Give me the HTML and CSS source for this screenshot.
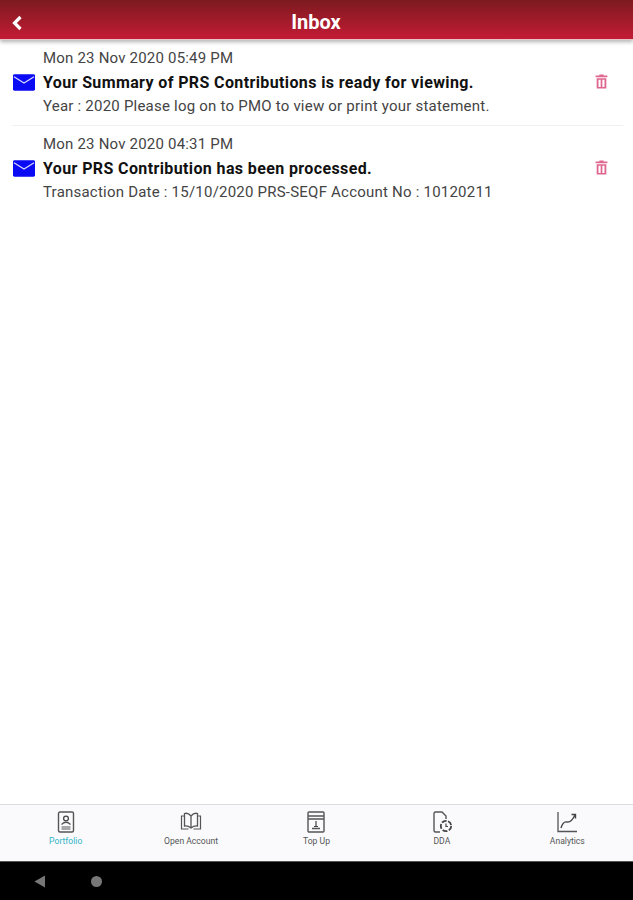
FILE: index.html
```html
<!doctype html>
<html lang="en-us">
<head>
    <title>Inbox</title>
    <link rel="stylesheet" href="styles.css">
</head>
<body>
    <div class="screen">
        <div class="top-bar">
            <svg class="back-icon" viewBox="0 0 12 16"><path d="M9.500 2 L3.500 8 L9.500 14" fill="none" stroke="#fff" stroke-width="3.200"/></svg>
            <div class="top-title">Inbox</div>
        </div>

        <div class="msg-list">
            <div class="msg">
                <div class="msg-date">Mon 23 Nov 2020 05:49 PM</div>
                <div class="msg-title">Your Summary of PRS Contributions is ready for viewing.</div>
                <div class="msg-body">Year : 2020 Please log on to PMO to view or print your statement.</div>
                <svg class="mail-icon" viewBox="0 0 23 17"><rect width="23" height="17" rx="1.500" fill="#0a0af5"/><path d="M1 2.500 L11.500 9 L22 2.500" fill="none" stroke="#d8d8ff" stroke-width="1.300"/></svg>
                <svg class="trash-icon" viewBox="0 0 12 14"><path d="M4 0.500 H8 V1.500 H11.500 V3 H0.500 V1.500 H4 Z" fill="#e0668f"/><path d="M1.500 4 H10.500 V13.500 H1.500 Z M3.200 5.300 V12.200 H5.200 V5.300 Z M6.800 5.300 V12.200 H8.800 V5.300 Z" fill="#e0668f" fill-rule="evenodd"/></svg>
            </div>
            <div class="msg">
                <div class="msg-date">Mon 23 Nov 2020 04:31 PM</div>
                <div class="msg-title">Your PRS Contribution has been processed.</div>
                <div class="msg-body">Transaction Date : 15/10/2020 PRS-SEQF Account No : 10120211</div>
                <svg class="mail-icon" viewBox="0 0 23 17"><rect width="23" height="17" rx="1.500" fill="#0a0af5"/><path d="M1 2.500 L11.500 9 L22 2.500" fill="none" stroke="#d8d8ff" stroke-width="1.300"/></svg>
                <svg class="trash-icon" viewBox="0 0 12 14"><path d="M4 0.500 H8 V1.500 H11.500 V3 H0.500 V1.500 H4 Z" fill="#e0668f"/><path d="M1.500 4 H10.500 V13.500 H1.500 Z M3.200 5.300 V12.200 H5.200 V5.300 Z M6.800 5.300 V12.200 H8.800 V5.300 Z" fill="#e0668f" fill-rule="evenodd"/></svg>
            </div>
        </div>

        <div class="tab-bar">
            <div class="tab tab-active">
                <svg class="tab-icon" viewBox="0 0 22 22"><rect x="3.500" y="1" width="15" height="20" rx="1.500" fill="none" stroke="#555" stroke-width="1.400"/><circle cx="11" cy="7.500" r="2.400" fill="none" stroke="#444" stroke-width="1.300"/><path d="M6.500 13.500 Q11 9 15.500 13.500 M6.500 16 H15.500 M6.500 18 H15.500" fill="none" stroke="#555" stroke-width="1.200"/></svg>
                <span>Portfolio</span>
            </div>
            <div class="tab">
                <svg class="tab-icon" viewBox="0 0 22 22"><path d="M11 5 Q8 1.500 4.500 2.500 V15 Q8 14.500 11 17 Q14 14.500 17.500 15 V2.500 Q14 1.500 11 5 Z M11 5 V17" fill="none" stroke="#555" stroke-width="1.300"/><path d="M4.500 5 H1.500 V18 H8.500 M17.500 5 H20.500 V18 H13.500" fill="none" stroke="#555" stroke-width="1.200"/></svg>
                <span>Open Account</span>
            </div>
            <div class="tab">
                <svg class="tab-icon" viewBox="0 0 22 22"><rect x="3" y="1" width="16" height="20" rx="1" fill="none" stroke="#555" stroke-width="1.400"/><path d="M3 5 H19 M3 8 H19 M7 17.500 H15" fill="none" stroke="#555" stroke-width="1.300"/><path d="M11 10 V15.500 M9 15.500 H13" fill="none" stroke="#444" stroke-width="1.200"/></svg>
                <span>Top Up</span>
            </div>
            <div class="tab">
                <svg class="tab-icon" viewBox="0 0 22 22"><path d="M9 21 H4.500 Q3 21 3 19.500 V2.500 Q3 1 4.500 1 H11 L15 5 V8" fill="none" stroke="#555" stroke-width="1.400"/><circle cx="15" cy="15" r="5.200" fill="none" stroke="#444" stroke-width="1.800" stroke-dasharray="5 1.500"/><path d="M15 12.500 V15.500 H17" fill="none" stroke="#444" stroke-width="1.200"/></svg>
                <span>DDA</span>
            </div>
            <div class="tab">
                <svg class="tab-icon" viewBox="0 0 22 22"><path d="M2 1 V20.500 H21" fill="none" stroke="#555" stroke-width="1.300"/><path d="M5 17 Q7 10 11 11 T19 4 M15.500 3.500 H19.500 V7.500" fill="none" stroke="#444" stroke-width="1.400"/></svg>
                <span>Analytics</span>
            </div>
        </div>

        <div class="nav-bar">
            <svg class="nav-back" viewBox="0 0 12 14"><path d="M12 0.500 V13.500 L0.500 7 Z" fill="#777"/></svg>
            <div class="nav-home"></div>
        </div>
    </div>
</body>
</html>
```

FILE: styles.css
```css
/* General styles */
body {
    margin: 0;
    font-family: Roboto, "Liberation Sans", sans-serif;
    background-color: #fff;
}

.screen {
    display: flex;
    flex-direction: column;
    height: 900px;
    overflow: hidden;
}

/* Top bar */
.top-bar {
    height: 39px;
    background: linear-gradient(#7c1a1f, #c41b35);
    box-shadow: 0 2px 4px rgba(0, 0, 0, 0.3);
    border-bottom: 1px solid #e8c4ca;
    display: flex;
    align-items: center;
    justify-content: center;
    position: relative;
}

.back-icon {
    position: absolute;
    left: 11px;
    top: 15px;
    width: 12px;
    height: 16px;
}

.top-title {
    color: #fff;
    font-size: 20px;
    font-weight: 700;
    margin-top: 5px;
    margin-right: 1px;
}

/* Messages */
.msg-list {
    flex: 1;
    padding: 0 10px 0 12px;
}

.msg {
    position: relative;
    height: 86px;
    box-sizing: border-box;
    padding: 10px 0 0 31px;
    border-bottom: 1px solid #f0f0f0;
}

.msg:last-child {
    border-bottom: none;
}

.msg-date {
    font-size: 15px;
    line-height: 17px;
    color: #444;
    letter-spacing: 0.2px;
}

.msg-title {
    font-size: 16px;
    font-weight: 700;
    line-height: 18px;
    color: #111;
    margin-top: 7px;
    letter-spacing: 0.38px;
}

.msg-body {
    font-size: 15px;
    line-height: 17px;
    color: #444;
    margin-top: 6px;
    letter-spacing: 0.22px;
}

.mail-icon {
    position: absolute;
    left: 1px;
    top: 34px;
    width: 22px;
    height: 17px;
}

.trash-icon {
    position: absolute;
    right: 15px;
    top: 34px;
    width: 13px;
    height: 15px;
}

/* Bottom tabs */
.tab-bar {
    height: 56px;
    background-color: #fafafc;
    border-top: 1px solid #dcdcdc;
    display: grid;
    grid-template-columns: repeat(5, 1fr);
    padding: 0 3px;
}

.tab {
    display: flex;
    flex-direction: column;
    align-items: center;
    padding-top: 6px;
    font-size: 8.6px;
    color: #555;
}

.tab span {
    margin-top: 3px;
}

.tab-active {
    color: #2fb4c6;
}

.tab-icon {
    width: 22px;
    height: 22px;
}

/* Android nav */
.nav-bar {
    height: 39px;
    background-color: #000;
    border-top: 1px solid #555;
    box-sizing: border-box;
    display: flex;
    align-items: center;
    padding-left: 34px;
    gap: 46px;
}

.nav-back {
    width: 11px;
    height: 13px;
}

.nav-home {
    width: 11px;
    height: 11px;
    border-radius: 50%;
    background-color: #777;
}
```
